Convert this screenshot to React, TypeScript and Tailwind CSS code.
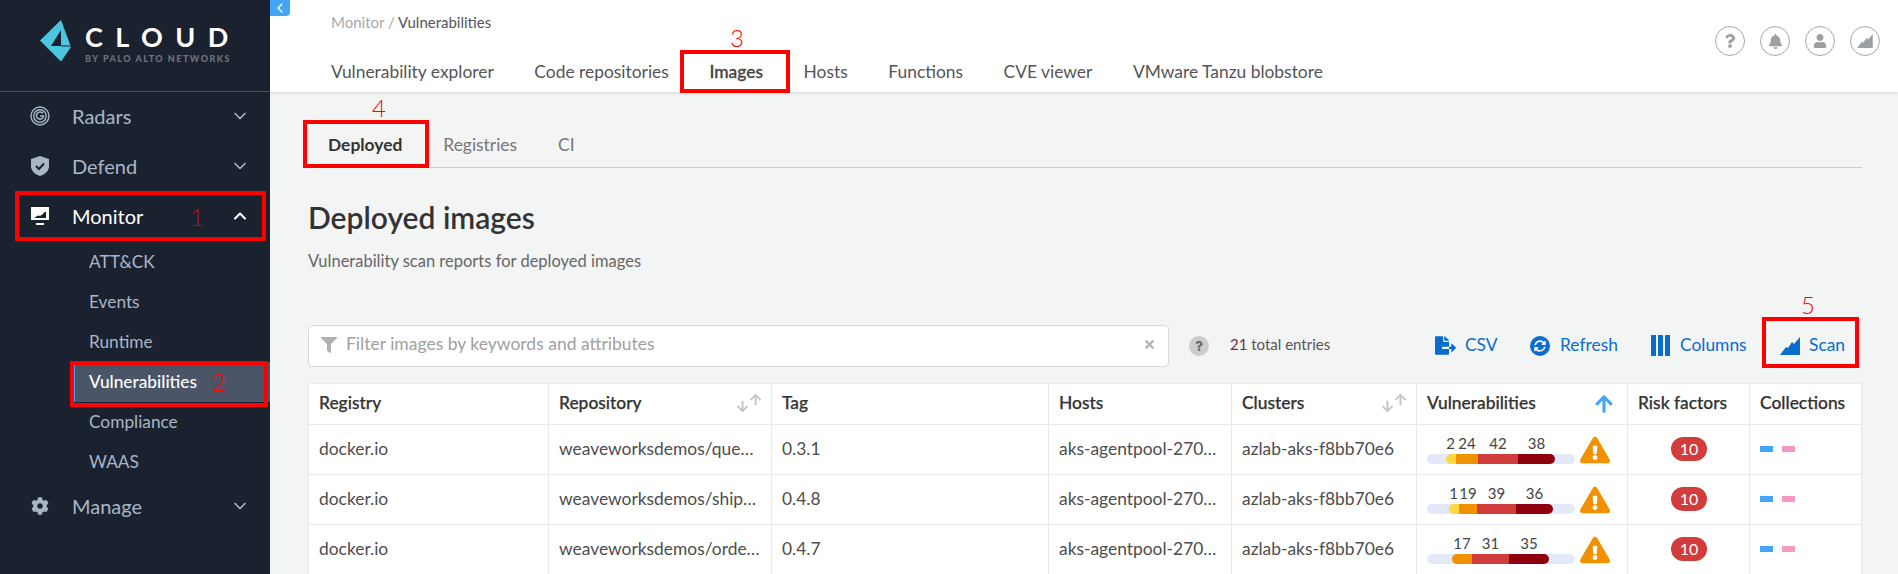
import { FaArrowDown, FaArrowUp, FaBell, FaCog, FaExclamationTriangle, FaFileExport, FaFilter, FaQuestion, FaSyncAlt, FaTimes, FaUser } from 'react-icons/fa';
import { LuChevronDown, LuChevronLeft, LuChevronUp } from 'react-icons/lu';

type Seg = { n: number | null; w: number; c: string };

type Row = {
  repo: string;
  tag: string;
  offset: number;
  segs: Seg[];
};

const rows: Row[] = [
  {
    repo: 'weaveworksdemos/queue-master',
    tag: '0.3.1',
    offset: 19,
    segs: [
      { n: 2, w: 10, c: 'bg-[#ffd740] rounded-l-full' },
      { n: 24, w: 22, c: 'bg-[#f29100]' },
      { n: 42, w: 40, c: 'bg-[#d13c3c]' },
      { n: 38, w: 37, c: 'bg-[#8e000d] rounded-r-full' },
    ],
  },
  {
    repo: 'weaveworksdemos/shipping',
    tag: '0.4.8',
    offset: 22,
    segs: [
      { n: 1, w: 10, c: 'bg-[#ffd740] rounded-l-full' },
      { n: 19, w: 18, c: 'bg-[#f29100]' },
      { n: 39, w: 39, c: 'bg-[#d13c3c]' },
      { n: 36, w: 37, c: 'bg-[#8e000d] rounded-r-full' },
    ],
  },
  {
    repo: 'weaveworksdemos/orders-service',
    tag: '0.4.7',
    offset: 25,
    segs: [
      { n: 17, w: 20, c: 'bg-[#f29100] rounded-l-full' },
      { n: 31, w: 37, c: 'bg-[#d13c3c]' },
      { n: 35, w: 40, c: 'bg-[#8e000d] rounded-r-full' },
    ],
  },
];

const gridCols = 'grid grid-cols-[240px_223px_277px_183px_185px_211px_122px_112px]';
const cell = 'border-r border-b border-[#e9e9e9] flex items-center pl-[10px] pr-[9px] pb-[1px] min-w-0';

function RadarIcon() {
  return (
    <svg width="20" height="20" viewBox="0 0 20 20" fill="none" stroke="currentColor">
      <circle cx="10" cy="10" r="9" strokeWidth="1.4" />
      <circle cx="10" cy="10" r="6.2" strokeWidth="1.4" />
      <path d="M13 7.5A3.6 3.6 0 1 0 13.6 10H10" strokeWidth="1.6" />
    </svg>
  );
}

function ShieldIcon() {
  return (
    <svg width="20" height="22" viewBox="0 0 20 22">
      <path d="M10 1 19 4v7c0 5-4 8.500-9 10-5-1.500-9-5-9-10V4z" fill="currentColor" />
      <path d="M6 11l3 3 5-5.500" fill="none" stroke="#1a2230" strokeWidth="2" />
    </svg>
  );
}

function MonitorIcon() {
  return (
    <svg width="20" height="20" viewBox="0 0 20 20">
      <path d="M1 1h18v13H1z" fill="#fff" />
      <path d="M6 17h8v2H6z" fill="#fff" />
      <path d="M4 12l4-2.500 2 .5 3-2 1-1.500 2-1V12z" fill="#1a2230" />
    </svg>
  );
}

function ScanIcon({ className }: { className?: string }) {
  return (
    <svg viewBox="0 0 20 18" className={className} fill="currentColor">
      <path d="M0 18 6 10 8 11 12 5 14 7 20 0V18z" />
    </svg>
  );
}

function ColumnsIcon() {
  return (
    <svg width="19" height="21" viewBox="0 0 19 21" fill="currentColor">
      <path d="M0 0h5v21H0zM7 0h5v21H7zM14 0h5v21h-5z" />
    </svg>
  );
}

function Logo() {
  return (
    <div className="flex items-start pl-[40px] pt-[20px] h-[92px] border-b border-[#4b5563]">
      <svg width="32" height="42" viewBox="0 0 32 42" className="shrink-0">
        <path d="M0 20.500 21 0 31 27 21 41.500z" fill="#4cc6e0" />
        <path d="M21 10 11 26H21z" fill="#1a2230" />
        <path d="M21 26H31" stroke="#1a2230" strokeWidth="1" />
      </svg>
      <div className="ml-[13px] flex flex-col">
        <span className="text-[27px] leading-[30px] mt-[2px] font-bold text-white tracking-[0.46em] whitespace-nowrap">CLOUD</span>
        <span className="text-[9px] leading-[12px] mt-[1px] font-black text-[#6e7279] tracking-[0.165em] whitespace-nowrap">BY PALO ALTO NETWORKS</span>
      </div>
    </div>
  );
}

function NavItem({ icon, label, open, active }: { icon: React.ReactNode; label: string; open?: boolean; active?: boolean }) {
  return (
    <div className={`h-[50px] flex items-center pl-[30px] pr-[20px] pb-[2px] ${active ? 'text-white' : 'text-[#a9b6c6]'}`}>
      <span className="w-[20px] flex justify-center">{icon}</span>
      <span className="ml-[22px] flex-1 text-[20px]">{label}</span>
      {open ? <LuChevronUp size={20} strokeWidth={2.5} /> : <LuChevronDown size={20} strokeWidth={2} />}
    </div>
  );
}

function Sidebar() {
  const subs = ['ATT&CK', 'Events', 'Runtime', 'Vulnerabilities', 'Compliance', 'WAAS'];
  return (
    <aside className="w-[270px] shrink-0 bg-[#1a2230] h-full">
      <Logo />
      <NavItem icon={<RadarIcon />} label="Radars" />
      <NavItem icon={<ShieldIcon />} label="Defend" />
      <NavItem icon={<MonitorIcon />} label="Monitor" open active />
      <div className="pl-[74px] flex flex-col">
        {subs.map(s => (
          <div
            key={s}
            className={`h-[40px] flex items-center text-[17.3px] pb-[1px] ${s === 'Vulnerabilities' ? 'bg-[#4a5568] text-white font-medium border-l border-[#42a5f5] pl-[14px]' : 'text-[#a9b6c6] pl-[15px]'}`}
          >
            {s}
          </div>
        ))}
      </div>
      <NavItem icon={<FaCog size={18} />} label="Manage" />
    </aside>
  );
}

function TopBar() {
  const tabs = ['Vulnerability explorer', 'Code repositories', 'Images', 'Hosts', 'Functions', 'CVE viewer', 'VMware Tanzu blobstore'];
  const round = 'w-[30px] h-[30px] rounded-full border border-[#a3a8ab] flex items-center justify-center text-[#9aa0a3]';
  return (
    <header className="relative h-[92px] shrink-0 bg-white shadow-[0_1px_4px_rgba(0,0,0,0.12)] flex justify-between pl-[61px] pr-[18px]">
      <div className="absolute left-0 top-0 w-[20px] h-[16px] bg-[#42a5f5] rounded-br-[4px] flex items-center justify-center text-white">
        <LuChevronLeft size={16} strokeWidth={2} />
      </div>
      <div className="flex flex-col">
        <div className="text-[15px] leading-[20px] mt-[12px] text-[#a8a8a8]">
          Monitor / <span className="text-[#555]">Vulnerabilities</span>
        </div>
        <nav className="flex gap-[40.6px] mt-[28px] text-[17.4px] leading-[24px] text-[#555]">
          {tabs.map(t => (
            <span key={t} className={t === 'Images' ? 'font-medium text-[#444] [-webkit-text-stroke:0.3px_#444]' : ''}>{t}</span>
          ))}
        </nav>
      </div>
      <div className="flex gap-[15px] mt-[26px]">
        <span className={round}><FaQuestion size={14} /></span>
        <span className={round}><FaBell size={15} /></span>
        <span className={round}><FaUser size={14} /></span>
        <span className={round}><ScanIcon className="w-[16px] h-[14px]" /></span>
      </div>
    </header>
  );
}

function Toolbar() {
  const action = 'flex items-center text-[#0a6ccd] text-[17.4px]';
  return (
    <div className="flex items-center mt-[53px] h-[42px]">
      <div className="w-[861px] h-full bg-white border border-[#d8d8d8] rounded-[4px] flex items-center px-[12px] pb-[3px] text-[#a0a0a0]">
        <FaFilter size={16} className="text-[#b0b0b0]" />
        <span className="ml-[9px] flex-1 text-[17.5px]">Filter images by keywords and attributes</span>
        <FaTimes size={13} className="text-[#b5b5b5]" />
      </div>
      <span className="ml-[20px] w-[20px] h-[20px] rounded-full bg-[#cccccc] flex items-center justify-center text-[#666]">
        <FaQuestion size={10} />
      </span>
      <span className="ml-[21px] w-[205px] text-[15px] text-[#555] pb-[3px]"><span className="text-[#7a2c2c]">21</span> total entries</span>
      <span className={`${action} w-[95px]`}><FaFileExport size={21} /><span className="ml-[9px] pb-[2px]">CSV</span></span>
      <span className={`${action} w-[121px]`}>
        <span className="w-[20px] h-[20px] rounded-full bg-[#0a6ccd] flex items-center justify-center text-[#f3f5f5]"><FaSyncAlt size={12} /></span>
        <span className="ml-[10px] pb-[2px]">Refresh</span>
      </span>
      <span className={`${action} w-[129px]`}><ColumnsIcon /><span className="ml-[10px] pb-[2px]">Columns</span></span>
      <span className={action}><ScanIcon className="w-[20px] h-[18px]" /><span className="ml-[9px] pb-[2px]">Scan</span></span>
    </div>
  );
}

function SortArrows() {
  return (
    <span className="flex text-[#c6c6c6] ml-auto">
      <FaArrowDown size={13} className="mt-[5px]" />
      <FaArrowUp size={13} className="-mt-[2px]" />
    </span>
  );
}

function VulnBar({ row }: { row: Row }) {
  return (
    <div className="w-[148px] shrink-0">
      <div className="flex text-[15px] leading-[18px] text-[#444]" style={{ paddingLeft: row.offset }}>
        {row.segs.map((s, i) => (
          <span key={i} className={`flex justify-center whitespace-nowrap ${s.w === 10 ? 'pr-[1px]' : ''}`} style={{ width: s.w }}>{s.n}</span>
        ))}
      </div>
      <div className="flex h-[10px] mt-[2px] rounded-full bg-[#e4e9fa]" style={{ paddingLeft: row.offset }}>
        {row.segs.map((s, i) => (
          <span key={i} className={s.c} style={{ width: s.w }} />
        ))}
      </div>
    </div>
  );
}

function ImagesTable() {
  const head = `${cell} text-[17.4px] font-medium text-[#333] [-webkit-text-stroke:0.25px_#333]`;
  return (
    <div className="mt-[16px] w-[1553px] bg-white border-t border-l border-[#e9e9e9]">
      <div className={`${gridCols} h-[41px]`}>
        <div className={head}>Registry</div>
        <div className={head}>Repository<SortArrows /></div>
        <div className={head}>Tag</div>
        <div className={head}>Hosts</div>
        <div className={head}>Clusters<SortArrows /></div>
        <div className={head}>Vulnerabilities<FaArrowUp size={20} className="ml-auto mr-[4px] text-[#42a5f5]" /></div>
        <div className={head}>Risk factors</div>
        <div className={head}>Collections</div>
      </div>
      {rows.map(r => (
        <div key={r.repo} className={`${gridCols} h-[50px] text-[17.4px] text-[#4d4d4d]`}>
          <div className={cell}>docker.io</div>
          <div className={cell}><span className="truncate">{r.repo}</span></div>
          <div className={cell}>{r.tag}</div>
          <div className={cell}><span className="truncate">aks-agentpool-27034256-vmss</span></div>
          <div className={cell}><span className="truncate">azlab-aks-f8bb70e6</span></div>
          <div className={cell}>
            <VulnBar row={r} />
            <FaExclamationTriangle size={30} className="ml-[5px] mt-[1px] text-[#f29100]" />
          </div>
          <div className={`${cell} justify-center`}>
            <span className="w-[36px] h-[24px] rounded-full bg-[#d13c3c] text-white text-[16px] flex items-center justify-center">10</span>
          </div>
          <div className={cell}>
            <span className="w-[13px] h-[6px] bg-[#42a5f5]" />
            <span className="w-[13px] h-[6px] bg-[#f49ac2] ml-[9px]" />
          </div>
        </div>
      ))}
    </div>
  );
}

function Mark({ className }: { className: string }) {
  return <div className={`absolute border-[4px] border-[#ff0000] ${className}`} />;
}

function Num({ children, className }: { children: React.ReactNode; className: string }) {
  return <span className={`absolute text-[24px] leading-[24px] font-light ${className}`}>{children}</span>;
}

export default function App() {
  return (
    <div className="relative w-[1898px] h-[574px] overflow-hidden flex bg-[#f3f5f5] font-['Lato',sans-serif]">
      <Sidebar />
      <main className="flex-1 min-w-0 flex flex-col">
        <TopBar />
        <div className="pl-[38px]">
          <div className="-ml-[4px] w-[1558px] h-[76px] border-b border-[#cccccc] flex gap-[41px] pt-[41px] pl-[24px] text-[17.4px] leading-[24px] text-[#777]">
            <span className="font-bold text-[#333]">Deployed</span>
            <span>Registries</span>
            <span>CI</span>
          </div>
          <h1 className="mt-[31px] text-[30px] leading-[36px] font-semibold text-[#333]">Deployed images</h1>
          <p className="mt-[15px] text-[16.5px] leading-[22px] text-[#666]">Vulnerability scan reports for deployed images</p>
          <Toolbar />
          <ImagesTable />
        </div>
      </main>

      <Mark className="left-[15px] top-[191px] w-[251px] h-[50px]" />
      <Mark className="left-[70px] top-[361px] w-[198px] h-[46px]" />
      <Mark className="left-[680px] top-[50px] w-[110px] h-[43px]" />
      <Mark className="left-[303px] top-[120px] w-[126px] h-[48px]" />
      <Mark className="left-[1762px] top-[317px] w-[97px] h-[51px]" />
      <Num className="left-[190px] top-[205px] text-[#c01010]">1</Num>
      <Num className="left-[212px] top-[370px] text-[#ff0000]">2</Num>
      <Num className="left-[730px] top-[26px] text-[#ff0000]">3</Num>
      <Num className="left-[372px] top-[96px] text-[#ff0000]">4</Num>
      <Num className="left-[1801px] top-[293px] text-[#ff0000]">5</Num>
    </div>
  );
}
